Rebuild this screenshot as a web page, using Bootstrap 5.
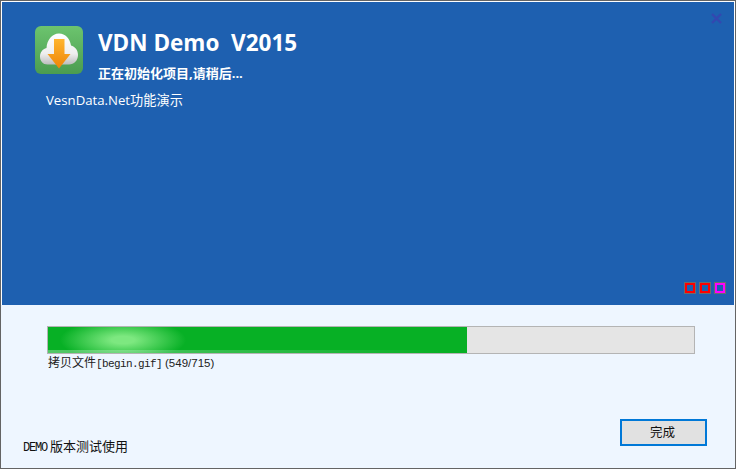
<!DOCTYPE html>
<html lang="zh-CN">
<head>
    <meta charset="UTF-8">
    <meta name="viewport" content="width=device-width, initial-scale=1.0">
    <title>VDN Demo</title>
    <link rel="stylesheet" href="https://cdn.jsdelivr.net/npm/bootstrap@5.3.0/dist/css/bootstrap.min.css">
    <style>
        html, body { height: 100%; margin: 0; background: #eef6ff; overflow: hidden; }
        .setup-win { width: 736px; height: 469px; border: 1px solid #646464; background: #eef6ff; }
        .setup-top { height: 304px; background: #1e60b0; border: 1px solid #fff; border-bottom: 0; padding: 24px 9px 11px 33px; }
        .close-x { position: absolute; top: 11px; right: 12px; width: 11px; height: 11px; }
        .app-icon { width: 48px; height: 48px; display: block; }
        .setup-head { gap: 15px; }
        .setup-title { font-family: "Open Sans", "Liberation Sans", sans-serif; font-weight: 700; font-size: 22.5px; line-height: 29px; margin-top: 2px; white-space: pre; color: #fff; }
        .setup-sub { font-family: "Open Sans", "Noto Sans CJK SC", sans-serif; font-weight: 700; font-size: 13px; line-height: 18px; margin-top: 7px; color: #fff; }
        .setup-desc { font-family: "Open Sans", "Noto Sans CJK SC", sans-serif; font-size: 13.2px; line-height: 18px; color: #fff; margin: 9px 0 0 11px; }
        .dot-row { gap: 5px; margin-bottom: 1px; }
        .dot-box { width: 10px; height: 10px; border: 2px solid #f00; outline: 1px solid #6d6d6d; }
        .dot-magenta { border-color: #f0f; }
        .setup-bottom { padding: 21px 28px 13px 21px; }
        .bar-track { margin: 0 12px 0 25px; height: 28px; background: #e5e5e5; border: 1px solid #b4b4b4; }
        .bar-fill { width: 419px; height: 100%; background: #07b025; position: relative; overflow: hidden; }
        .bar-glow { position: absolute; left: 12px; top: -8px; width: 126px; height: 42px; background: radial-gradient(ellipse closest-side, #7de880 18%, rgba(125,232,128,0) 100%); }
        .bar-sheen { position: absolute; left: 0; right: 0; bottom: 0; height: 3px; background: linear-gradient(90deg, rgba(255,255,255,.3), rgba(255,255,255,.12) 60%, rgba(255,255,255,0) 95%); }
        .bar-label { font-family: "Noto Sans CJK SC", sans-serif; font-size: 12px; line-height: 14px; color: #222; margin: 1px 0 0 26px; }
        .label-file { font-family: "Liberation Mono", monospace; font-size: 11px; letter-spacing: -.6px; margin-right: 3px; }
        .label-count { font-family: "Liberation Sans", sans-serif; font-size: 11.5px; }
        .foot-note { font-family: "Noto Sans CJK SC", sans-serif; font-size: 13px; line-height: 14px; color: #111; margin-left: 1px; }
        .foot-latin { font-family: "Liberation Mono", monospace; font-size: 12px; letter-spacing: -1.2px; margin-right: 3px; }
        .done-btn { width: 87px; height: 27px; padding: 0 2px 0 0; margin-bottom: 9px; border: 2px solid #0078d7; border-radius: 0; background: #e1e1e1; color: #111; font-family: "Noto Sans CJK SC", sans-serif; font-size: 12.5px; line-height: 1; }
        .done-btn:hover { background: #e1e1e1; border-color: #0078d7; color: #111; }
    </style>
</head>
<body>
    <div class="setup-win d-flex flex-column">
        <!-- blue banner -->
        <div class="setup-top position-relative d-flex flex-column">
            <svg class="close-x" viewBox="0 0 11 11"><path d="M1 1 10 10M10 1 1 10" stroke="#3348b0" stroke-width="2.400" fill="none"/></svg>
            <div class="setup-head d-flex">
                <svg class="app-icon" viewBox="0 0 48 48">
                    <defs>
                        <linearGradient id="tile" x1="0" y1="0" x2="0" y2="1"><stop offset="0" stop-color="#6cc46e"/><stop offset="1" stop-color="#4b9c50"/></linearGradient>
                        <linearGradient id="cloud" x1="0" y1="0" x2="0" y2="1"><stop offset="0" stop-color="#fff"/><stop offset=".65" stop-color="#eee"/><stop offset="1" stop-color="#bdbdbd"/></linearGradient>
                        <linearGradient id="arrow" x1="0" y1="0" x2="0" y2="1"><stop offset="0" stop-color="#ffb52e"/><stop offset="1" stop-color="#ee8508"/></linearGradient>
                    </defs>
                    <rect width="48" height="48" rx="6" fill="url(#tile)"/>
                    <path d="M12.500 38.500C8 38.500 5 35 5 30.500c0-4 2.500-7.500 6.500-8.500C12 14 17 7.500 24 7.500c6.500 0 11 5 12 12 4 1 7 4.500 7 9.500 0 5.500-4 9.500-9 9.500z" fill="url(#cloud)"/>
                    <path d="M19 13h10.500v15H35.500L24 42.500 12.500 28H19z" fill="url(#arrow)"/>
                </svg>
                <div>
                    <div class="setup-title">VDN Demo  V2015</div>
                    <div class="setup-sub">正在初始化项目,请稍后...</div>
                </div>
            </div>
            <div class="setup-desc">VesnData.Net功能演示</div>
            <div class="dot-row d-flex justify-content-end mt-auto">
                <span class="dot-box"></span>
                <span class="dot-box"></span>
                <span class="dot-box dot-magenta"></span>
            </div>
        </div>

        <!-- progress area -->
        <div class="setup-bottom d-flex flex-column flex-grow-1">
            <div class="bar-track">
                <div class="bar-fill">
                    <div class="bar-glow"></div>
                    <div class="bar-sheen"></div>
                </div>
            </div>
            <div class="bar-label">拷贝文件<span class="label-file">[begin.gif]</span><span class="label-count">(549/715)</span></div>
            <div class="d-flex justify-content-between align-items-end mt-auto">
                <div class="foot-note"><span class="foot-latin">DEMO</span>版本测试使用</div>
                <button class="btn done-btn" type="button">完成</button>
            </div>
        </div>
    </div>
    <script src="https://cdn.jsdelivr.net/npm/bootstrap@5.3.0/dist/js/bootstrap.bundle.min.js"></script>
</body>
</html>
